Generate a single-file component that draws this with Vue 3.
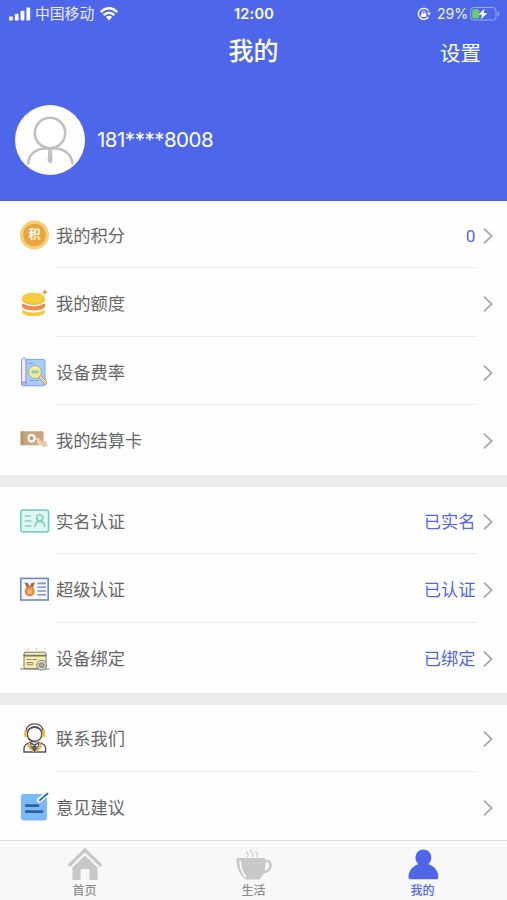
<template>
  <div class="mine-page">
    <header class="mine-header">
      <div class="status-bar">
        <div class="status-left">
          <svg class="signal-icon" viewBox="0 0 22 14">
            <rect x="0" y="9.4" width="3.8" height="4" rx="1" />
            <rect x="5.8" y="6.8" width="3.8" height="6.6" rx="1" />
            <rect x="11.6" y="3.8" width="3.8" height="9.6" rx="1" />
            <rect x="17.4" y="0.4" width="3.8" height="13" rx="1" />
          </svg>
          <span class="carrier">中国移动</span>
          <svg class="wifi-icon" viewBox="0 0 18 14">
            <path d="M0.8 5 Q9 -2.6 17.2 5" />
            <path d="M3.6 8.2 Q9 3.2 14.4 8.2" />
            <path class="wifi-dot" d="M5.9 10.1 Q9 7.5 12.1 10.1 L9 13.4 Z" />
          </svg>
        </div>
        <div class="status-time">12:00</div>
        <div class="status-right">
          <svg class="lock-icon" viewBox="0 0 14 14">
            <path d="M11.6 4 A5.5 5.5 0 1 0 11.4 10" />
            <path class="lock-fill" d="M9.8 5.6 H13.8 L12 8.6 Z" />
            <rect class="lock-fill" x="4.1" y="6.2" width="5.2" height="3.9" rx="0.6" />
            <path class="lock-bar" d="M5.2 6.4 V5.4 A1.5 1.5 0 0 1 8.2 5.4 V6.4" />
          </svg>
          <span class="battery-text">29%</span>
          <svg class="battery-icon" viewBox="0 0 30 14">
            <rect class="battery-box" x="0.5" y="0.5" width="25.5" height="12.6" rx="3.4" />
            <path class="battery-cap" d="M27.6 4.6 Q29.4 5.2 29.4 6.9 Q29.4 8.6 27.6 9.2 Z" />
            <rect class="battery-level" x="2.2" y="2.2" width="7" height="9.2" rx="1.6" />
            <path class="battery-bolt" d="M14.6 1.4 L8.4 7.7 H12 L10.9 12.4 L17.2 6 H13.5 Z" />
          </svg>
        </div>
      </div>

      <div class="nav-bar">
        <span></span>
        <h1 class="nav-title">我的</h1>
        <span class="nav-action">设置</span>
      </div>

      <div class="user-info">
        <div class="avatar">
          <svg viewBox="0 0 70 70">
            <circle cx="35" cy="28" r="15.2" />
            <path d="M13 58.5 C14 49 21 43.6 30 43.4 H40 C49 43.6 56.5 49 57.5 58.5" />
            <path class="avatar-tie" d="M33.4 43.5 H36.8 L37.6 56 L35.2 58.8 L32.6 56 Z" />
          </svg>
        </div>
        <span class="phone">181****8008</span>
      </div>
    </header>

    <main class="menu-list">
      <section v-for="(group, index) in groups" :key="index" class="menu-group">
        <div v-for="item in group" :key="item.icon" class="menu-item">
          <svg class="menu-icon" viewBox="0 0 31 31">
            <g v-if="item.icon === 'points'">
              <circle cx="15.5" cy="15" r="14.5" fill="#f3d07a" />
              <circle cx="15.5" cy="15" r="11.3" fill="#eaa63c" />
              <text x="15.5" y="19.4" class="points-text">积</text>
            </g>
            <g v-else-if="item.icon === 'quota'">
              <path d="M3 22.2 Q14.5 27 26 22.2 V24.4 Q24.6 28 14.5 28 Q4.4 28 3 24.4 Z" fill="#f5c93c" />
              <path d="M3 15.6 Q14.5 21 26 15.6 V18.6 Q24.6 22.4 14.5 22.4 Q4.4 22.4 3 18.6 Z" fill="#f08a48" />
              <path d="M3 10 V12.6 Q6 17 14.5 17 Q23 17 26 12.6 V10 Z" fill="#f6bf34" />
              <ellipse cx="14.5" cy="9.8" rx="11.5" ry="5.4" fill="#f6cd3e" />
              <path d="M25.8 1.3 L26.7 3.3 L28.7 4.2 L26.7 5.1 L25.8 7.1 L24.9 5.1 L22.9 4.2 L24.9 3.3 Z" fill="#f08a48" />
            </g>
            <g v-else-if="item.icon === 'rate'" stroke-linecap="round">
              <rect x="6.6" y="2.4" width="19.4" height="26.4" rx="1.6" fill="#a9cdfb" stroke="#7f9fe0" />
              <path
                d="M2.6 4 Q2.6 0.9 4.8 0.9 Q7 0.9 7 4 V25.2 H4.4 Q2.6 25.2 2.6 27 Z"
                fill="#eef0fd"
                stroke="#8a8fce"
              />
              <path d="M2.6 27 Q2.8 25.2 4.6 25.2 H7 V28.8 H4.4 Q2.6 28.8 2.6 27 Z" fill="#cfc4f0" stroke="#8a8fce" />
              <path d="M10 6.3 H14 M11 23.5 H14 M16.5 23.5 H19" stroke="#7495dd" />
              <path d="M20.8 19.6 L26.6 25.8" stroke="#8f8b83" stroke-width="3.6" />
              <path d="M20.8 19.6 L26.6 25.8" stroke="#f6df8b" stroke-width="2.2" />
              <circle cx="16" cy="15" r="6.5" fill="#f8ec96" stroke="#8db1b4" />
              <rect x="12.4" y="13.2" width="7.2" height="3.4" rx="1.4" fill="#8fcfae" />
            </g>
            <g v-else-if="item.icon === 'card'">
              <rect x="1.6" y="6.2" width="23" height="14" rx="1.4" fill="#c8a57e" />
              <rect x="1.6" y="6.2" width="3" height="14" rx="1" fill="#b99570" />
              <ellipse cx="12.6" cy="13.2" rx="3" ry="3.3" fill="#c3986b" stroke="#fff" stroke-width="2.3" />
              <path
                d="M17.4 12.8 Q19.4 11.6 20.8 13.8 L22.4 16 L26.6 16.2 Q28.6 18 28.6 20.8 L25 22.2 L19.6 19.4 Z"
                fill="#eccaa6"
              />
              <path d="M16.8 13 L20 17.6 M18 17.4 L23.6 20.8" stroke="#fbeede" stroke-width="0.9" fill="none" />
            </g>
            <g v-else-if="item.icon === 'realname'" fill="none" stroke="#80cfc3" stroke-linecap="round">
              <rect x="1.8" y="4.2" width="27.8" height="21.6" rx="2" fill="#e0f8f4" stroke-width="1.7" />
              <path d="M6.4 10 H11 M6.4 15 H12 M6.4 20 H12" stroke-width="1.6" />
              <circle cx="20.8" cy="11.8" r="3.1" stroke-width="1.6" />
              <path d="M16 20.4 Q16.4 15.4 20.8 15.4 Q25.2 15.4 25.6 20.4" stroke-width="1.6" />
            </g>
            <g v-else-if="item.icon === 'super'">
              <rect x="1.8" y="4.4" width="27.4" height="21.6" fill="#f6f9ff" stroke="#7088c4" stroke-width="1.6" />
              <path d="M5.4 8.4 L9 9 L10.6 12.4 L12.6 9 L16.2 8.4 L13.4 14.2 H8 Z" fill="#a86a45" />
              <circle cx="10.7" cy="17.4" r="5" fill="#e08a46" />
              <circle cx="10.7" cy="17.4" r="2.6" fill="#f0b273" />
              <path
                d="M18.4 9.4 H27 M18.4 13.2 H27 M18.4 17 H27 M18.4 20.8 H27"
                stroke="#7d93cb"
                stroke-width="1.6"
              />
            </g>
            <g v-else-if="item.icon === 'bind'" fill="none" stroke="#7a776d" stroke-linecap="round">
              <rect x="5" y="9.2" width="22" height="16.6" rx="1.6" fill="#f9efad" />
              <path d="M5 12.6 H27" stroke-width="1.6" />
              <path d="M8 16.5 H12 M14 16.5 H18" stroke-width="0.9" />
              <rect x="8" y="19.6" width="6" height="2.2" rx="1" stroke-width="0.9" />
              <path d="M1.4 26 H30" />
              <circle cx="22.6" cy="22.2" r="4.9" fill="#ece8dc" />
              <circle cx="22.6" cy="22.2" r="2.7" fill="#aaa69b" stroke-width="0.8" />
              <path d="M9.5 6 V7 M18 5 L17 7 M26 5.6 V6.2 M0.8 14.4 H1.2" stroke="#dfc65e" />
            </g>
            <g v-else-if="item.icon === 'contact'" fill="none" stroke="#555" stroke-linecap="round">
              <path
                d="M5 29 V25 Q5.8 20.6 11.4 19.6 L15.5 22.4 L19.6 19.6 Q26 20.6 26.6 25 V29 Z"
                fill="#fff"
                stroke-width="1.4"
              />
              <path d="M10.2 20.8 L9.4 23.6 L14.2 28 M21 20.8 L21.8 23.6 L17.2 28" stroke="#e9b24c" stroke-width="2" />
              <path d="M12 20.2 L11.8 23 L15.5 28 L19.6 23 L19.2 20.2" stroke-width="1.1" />
              <path d="M13.8 23.4 H17.4 L15.6 27 Z" fill="#555" />
              <circle cx="15.6" cy="11" r="7.3" fill="#fff" stroke-width="1.5" />
              <path d="M7 8 Q8 0.9 15.6 0.9 Q23.2 0.9 24.2 8" stroke-width="1.2" />
              <path d="M9 7.2 Q12 4.3 15.6 4.3 Q19.2 4.3 22.2 7.2" stroke-width="1.3" />
              <path d="M6.6 8.4 V12.8 M24.6 8.4 V12.8" stroke="#f2b63e" stroke-width="2.8" />
              <path d="M9.6 16 Q12.5 19.4 17 18.8" stroke-width="1.3" />
            </g>
            <g v-else fill="none" stroke-linecap="round">
              <rect x="2" y="2" width="26" height="26.4" rx="2.6" fill="#7cb9fa" />
              <path d="M20.4 8.2 L29 1" stroke="#fff" stroke-width="5" />
              <path d="M20.8 8.2 L28.6 1.6" stroke="#3a6fae" stroke-width="2" />
              <path d="M7.2 13.6 H19 M7.2 19.6 H23" stroke="#2c60a5" stroke-width="2.9" />
            </g>
          </svg>
          <div class="menu-content">
            <span class="menu-label">{{ item.label }}</span>
            <span class="menu-value">{{ item.value }}</span>
          </div>
          <svg class="menu-arrow" viewBox="0 0 10 18">
            <path d="M0.9 1.6 L8.8 9 L0.9 16.4" />
          </svg>
        </div>
      </section>
    </main>

    <nav class="tab-bar">
      <div
        v-for="tab in tabs"
        :key="tab.icon"
        class="tab-item"
        :class="{ active: tab.icon === activeTab }"
        @click="activeTab = tab.icon"
      >
        <svg class="tab-icon" viewBox="0 0 38 34">
          <g v-if="tab.icon === 'home'">
            <path d="M3.6 18 L19 3 L34.4 18" class="home-roof" />
            <path d="M19 8.4 L31.6 20.4 V33 H23.4 V23.4 Q23.4 22 22 22 H16 Q14.6 22 14.6 23.4 V33 H6.4 V20.4 Z" />
          </g>
          <g v-else-if="tab.icon === 'life'">
            <path
              d="M2.6 11 H28.6 Q30.8 11 30.8 13.2 Q31 26 24.4 32.6 H10.6 Q1.4 25 1.4 13 Q1.4 11 2.6 11 Z"
            />
            <path class="cup-shine" d="M5.2 14 Q5.4 24 10.6 29.6" />
            <path class="cup-handle" d="M30 14.2 Q35.6 13 35.6 18.2 Q35 25 27.6 25.4" />
            <path class="cup-steam" d="M11.4 4.8 Q14.2 7 12.2 10 M16 2.6 Q15 4.4 17 6 Q18.8 7.6 17.8 9.8 M20.6 4.4 Q23.4 7 21.6 9.8" />
          </g>
          <g v-else>
            <ellipse cx="19.4" cy="10.6" rx="8" ry="8.2" />
            <path d="M14.4 17 H24.4 Q33.8 20.4 34.4 30 Q34.4 32.2 32.2 32.2 H6.6 Q4.4 32.2 4.4 30 Q5 20.4 14.4 17 Z" />
          </g>
        </svg>
        <span class="tab-label">{{ tab.label }}</span>
      </div>
    </nav>
  </div>
</template>

<script setup>
import { ref } from 'vue'

const groups = [
  [
    { icon: 'points', label: '我的积分', value: '0' },
    { icon: 'quota', label: '我的额度' },
    { icon: 'rate', label: '设备费率' },
    { icon: 'card', label: '我的结算卡' },
  ],
  [
    { icon: 'realname', label: '实名认证', value: '已实名' },
    { icon: 'super', label: '超级认证', value: '已认证' },
    { icon: 'bind', label: '设备绑定', value: '已绑定' },
  ],
  [
    { icon: 'contact', label: '联系我们' },
    { icon: 'feedback', label: '意见建议' },
  ],
]

const tabs = [
  { icon: 'home', label: '首页' },
  { icon: 'life', label: '生活' },
  { icon: 'mine', label: '我的' },
]

const activeTab = ref('mine')
</script>

<style>
body {
  margin: 0;
}
</style>

<style scoped>
.mine-page {
  height: 900px;
  display: flex;
  flex-direction: column;
  overflow: hidden;
  background: #fefefe;
  font-family: Roboto, 'Noto Sans CJK SC', sans-serif;
}

.mine-header {
  height: 201px;
  flex: none;
  background: #4e67ea;
  color: #fff;
}

.status-bar {
  height: 28px;
  padding: 0 7px 0 9px;
  display: grid;
  grid-template-columns: 1fr auto 1fr;
  align-items: center;
  box-sizing: border-box;
}

.status-left,
.status-right {
  display: flex;
  align-items: center;
}

.status-right {
  justify-content: flex-end;
}

.signal-icon {
  width: 22px;
  height: 14px;
  margin-bottom: 1px;
  fill: #fff;
}

.carrier {
  margin: 0 6px 0 4px;
  font-size: 14.8px;
  line-height: 28px;
  opacity: 0.9;
}

.wifi-icon {
  width: 18px;
  height: 14px;
  margin-bottom: 1px;
  fill: none;
  stroke: #fff;
  stroke-width: 2.5;
}

.wifi-icon .wifi-dot {
  fill: #fff;
  stroke: none;
}

.status-time {
  margin: 0 1px 2px 0;
  font-family: Inter, sans-serif;
  font-size: 14.5px;
  font-weight: 600;
  letter-spacing: 0.2px;
}

.lock-icon {
  width: 14px;
  height: 14px;
  fill: none;
  stroke: #fff;
  stroke-width: 1.4;
}

.lock-icon .lock-fill {
  fill: #fff;
  stroke: none;
}

.lock-icon .lock-bar {
  stroke-width: 1;
}

.battery-text {
  margin: 0 2px 2px 6px;
  font-family: Inter, sans-serif;
  font-size: 14.2px;
  letter-spacing: -0.1px;
  opacity: 0.92;
}

.battery-icon {
  width: 30px;
  height: 14px;
  margin-bottom: 1px;
}

.battery-box {
  fill: none;
  stroke: #9aa8f2;
}

.battery-cap {
  fill: #9aa8f2;
}

.battery-level {
  fill: #64cf68;
}

.battery-bolt {
  fill: #fff;
}

.nav-bar {
  height: 48px;
  padding-right: 26px;
  padding-left: 26px;
  display: grid;
  grid-template-columns: 1fr auto 1fr;
  align-items: center;
}

.nav-title {
  margin: 0;
  font-size: 25px;
  line-height: 36px;
  font-weight: 500;
}

.nav-action {
  justify-self: end;
  margin-bottom: 1px;
  font-size: 20.5px;
}

.user-info {
  padding: 29px 15px 0;
  display: flex;
  align-items: center;
  gap: 12px;
}

.avatar {
  width: 70px;
  height: 70px;
  border-radius: 50%;
  background: #fff;
}

.avatar svg {
  display: block;
  fill: none;
  stroke: #c0c0c0;
  stroke-width: 2.5;
  stroke-linecap: round;
}

.avatar .avatar-tie {
  fill: #c0c0c0;
  stroke: none;
}

.phone {
  font-family: Inter, sans-serif;
  font-size: 20.5px;
  line-height: 30px;
  letter-spacing: -0.5px;
}

.menu-list {
  flex: 1;
  min-height: 0;
  overflow: hidden;
}

.menu-group + .menu-group {
  border-top: 12px solid #ebebeb;
}

.menu-item {
  height: 68.5px;
  padding: 0 14.5px 0 19px;
  display: flex;
  align-items: center;
}

.menu-icon {
  width: 31px;
  height: 31px;
  margin-right: 6px;
  flex: none;
}

.points-text {
  fill: #fff;
  font-size: 12px;
  font-weight: 700;
  text-anchor: middle;
}

.menu-content {
  height: 66px;
  padding-top: 1px;
  flex: 1;
  display: flex;
  align-items: center;
  justify-content: space-between;
  box-sizing: border-box;
  border-bottom: 1px solid #ececec;
}

.menu-item:last-child .menu-content {
  border-bottom-color: transparent;
}

.menu-label,
.menu-value {
  font-size: 17.25px;
  line-height: 24px;
}

.menu-label {
  margin-top: 1px;
  color: #666;
}

.menu-value {
  margin-top: 1px;
  margin-right: 1px;
  color: #5068e6;
}

.menu-arrow {
  width: 10px;
  height: 18px;
  margin: 1px 0 0 6px;
  fill: none;
  stroke: #a8a8a8;
  stroke-width: 1.8;
}

.tab-bar {
  height: 60px;
  flex: none;
  display: flex;
  background: #f8f8f8;
  border-top: 1.5px solid #dedede;
  box-sizing: border-box;
}

.tab-item {
  flex: 1;
  padding-top: 6px;
  display: flex;
  flex-direction: column;
  align-items: center;
  color: #8c8c8c;
}

.tab-item.active {
  color: #4e67ea;
}

.tab-icon {
  width: 38px;
  height: 34px;
  fill: #c8c8c8;
}

.tab-item.active .tab-icon {
  fill: #4e67ea;
}

.home-roof {
  fill: none;
  stroke: #c8c8c8;
  stroke-width: 3.2;
  stroke-linecap: round;
}

.cup-shine {
  fill: none;
  stroke: #f8f8f8;
  stroke-width: 1.8;
  stroke-linecap: round;
}

.cup-handle {
  fill: none;
  stroke: #c8c8c8;
  stroke-width: 2.6;
}

.cup-steam {
  fill: none;
  stroke: #c8c8c8;
  stroke-width: 1.1;
  stroke-linecap: round;
}

.tab-label {
  margin-top: 2px;
  font-size: 12px;
  line-height: 16px;
  font-weight: 500;
}
</style>
